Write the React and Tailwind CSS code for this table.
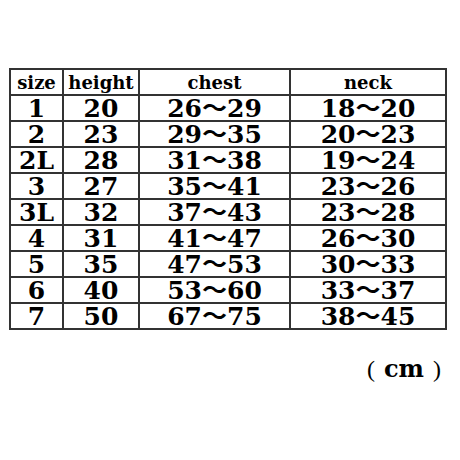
import React from 'react';

const rows = [
    ['1', '20', '26〜29', '18〜20'],
    ['2', '23', '29〜35', '20〜23'],
    ['2L', '28', '31〜38', '19〜24'],
    ['3', '27', '35〜41', '23〜26'],
    ['3L', '32', '37〜43', '23〜28'],
    ['4', '31', '41〜47', '26〜30'],
    ['5', '35', '47〜53', '30〜33'],
    ['6', '40', '53〜60', '33〜37'],
    ['7', '50', '67〜75', '38〜45'],
];

const serif = { fontFamily: '"DejaVu Serif", "Noto Sans CJK JP", serif' };

export default function App() {
    return (
        <div className="w-[460px] h-[460px] bg-white text-black overflow-hidden" style={serif}>
            <div className="pt-[68px] pl-[9px]">
                <table className="border-collapse table-fixed w-[436px]">
                    <colgroup>
                        <col className="w-[53px]" />
                        <col className="w-[76px]" />
                        <col className="w-[151px]" />
                        <col className="w-[156px]" />
                    </colgroup>
                    <thead>
                        <tr className="h-[26px]">
                            {['size', 'height', 'chest', 'neck'].map((h) => (
                                <th key={h} className="border-2 border-[#333] p-0 text-center text-[18px] font-bold leading-[23px]">
                                    {h}
                                </th>
                            ))}
                        </tr>
                    </thead>
                    <tbody>
                        {rows.map((r) => (
                            <tr key={r[0]} className="h-[26px]">
                                {r.map((c, i) => (
                                    <td key={i} className="border-2 border-[#333] p-0 text-center text-[25px] font-bold leading-[23px] whitespace-nowrap">
                                        {c}
                                    </td>
                                ))}
                            </tr>
                        ))}
                    </tbody>
                </table>
            </div>
            <div className="flex justify-end items-baseline pr-[19px] mt-[21px] gap-[9px]">
                <span className="text-[24px] font-normal" style={{ fontFamily: '"Liberation Serif", serif' }}>(</span>
                <span className="text-[24px] font-bold">cm</span>
                <span className="text-[24px] font-normal" style={{ fontFamily: '"Liberation Serif", serif' }}>)</span>
            </div>
        </div>
    );
}
